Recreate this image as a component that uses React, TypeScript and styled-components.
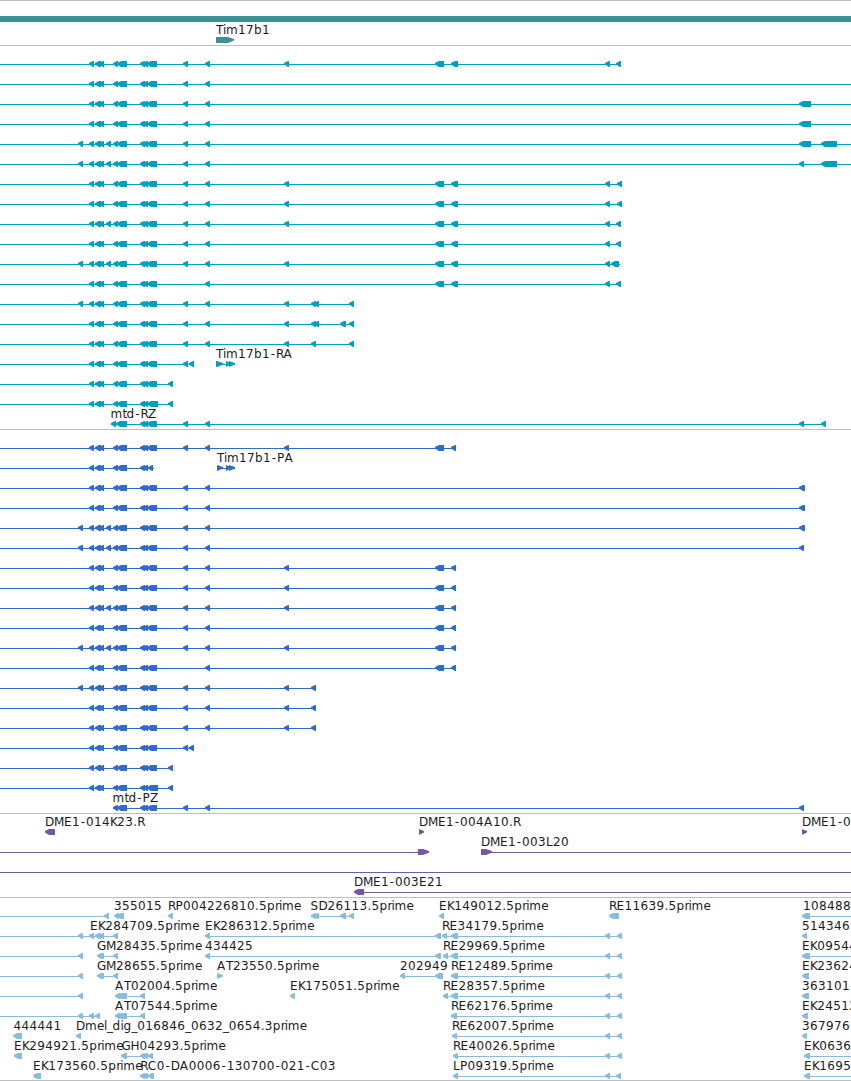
import React from 'react';
import styled, { createGlobalStyle } from 'styled-components';

const WIDTH = 851;

const GlobalStyle = createGlobalStyle`
  body {
    margin: 0;
    background: #ffffff;
    overflow: hidden;
  }
`;

const Viewer = styled.main`
  display: flex;
  flex-direction: column;
  width: ${WIDTH}px;
  height: 1081px;
  overflow: hidden;
  border-top: 1px solid #bebebe;
  box-sizing: border-box;
  background: #ffffff;
`;

const Track = styled.section<{ $last?: boolean }>`
  display: flex;
  flex-direction: column;
  flex: none;
  padding: 2px 0 ${(p) => (p.$last ? 0 : 1)}px;
  border-bottom: 1px solid #bebebe;
`;

const GeneTrack = styled.section`
  display: flex;
  flex-direction: column;
  flex: none;
  height: 29px;
  padding-top: 15px;
  border-bottom: 1px solid #bebebe;
`;

const GeneBar = styled.div`
  height: 6px;
  margin-bottom: 2px;
  background: #3c8f94;
`;

const Lane = styled.svg`
  display: block;
  flex: none;
  width: ${WIDTH}px;
  height: 20px;
  overflow: visible;
`;

const Label = styled.text`
  font-family: 'DejaVu Sans', sans-serif;
  font-size: 12px;
  fill: #1c1c1c;
`;

type Block = [number, number];

interface Feature {
  from: number;
  to: number;
  blocks: Block[];
  forward?: boolean;
  label?: string;
  labelX?: number;
}

/* Advance widths for the label face, in pixels. */
const ADVANCE: Record<string, number> = {
  T: 7, i: 3, l: 3, m: 12, b: 8, d: 8, g: 8, p: 8, r: 4, e: 7, t: 4, _: 5.7, '-': 6, '.': 4,
  A: 9, C: 9, D: 9, E: 8, G: 9, H: 9, K: 7.3, L: 7, M: 10, P: 7.5, R: 7.5, S: 8, Z: 7,
};

function glyphPositions(text: string, start: number): string {
  let x = /^[DEGLRS135]/.test(text) ? start + 0.9 : start;
  const xs: number[] = [];
  for (const ch of text) {
    xs.push(Math.round((ch === '-' ? x + 0.8 : x) * 10) / 10);
    x += ADVANCE[ch] ?? 8;
  }
  return xs.join(' ');
}

function blockPath([s, e]: Block, forward?: boolean): string {
  if (forward) {
    const h = Math.min(6, e - s);
    return `M${s} 13H${e - h}L${e} 15V16.4L${e - h} 19H${s}Z`;
  }
  const h = Math.min(5, e - s);
  return `M${s} 15L${s + h - 1} 13H${e}V19H${s + h - 1}L${s} 16.4Z`;
}

function FeatureLane({ features, color }: { features: Feature[]; color: string }) {
  return (
    <Lane viewBox={`0 0 ${WIDTH} 20`}>
      {features.map((f, i) => (
        <g key={i} fill={color}>
          {f.to > f.from && <rect x={f.from} y={16} width={f.to - f.from} height={1} />}
          {f.blocks.map((b, j) => (
            <path key={j} d={blockPath(b, f.forward)} />
          ))}
        </g>
      ))}
      {features.map(
        (f, i) =>
          f.label && (
            <Label key={i} x={glyphPositions(f.label, f.labelX ?? f.from)} y={10}>
              {f.label}
            </Label>
          ),
      )}
    </Lane>
  );
}

const span = (to: number, blocks: Block[], from = 0): Feature => ({ from, to, blocks });
const named = (label: string, labelX: number, blocks: Block[], from = 0, to = 0, forward = false): Feature => ({
  from, to, blocks, label, labelX, forward,
});

const HEAD: Block[] = [[89, 94], [95, 101], [99, 104], [113, 118]];
const CORE: Block[] = [...HEAD, [117, 127], [140, 145], [143, 148], [147, 157]];
const X78: Block = [78, 83];
const X106: Block = [106, 111];
const X183: Block = [183, 188];
const X205: Block = [205, 210];
const X284: Block = [284, 289];
const PAIR: Block[] = [X183, X205];
const MID: Block[] = [[435, 444], [451, 458]];
const MID_P: Block[] = [[435, 444], [451, 456]];
const FAR: Block[] = [...MID, [605, 610], [616, 621]];
const FAR2: Block[] = [...MID, [605, 610], [617, 622]];
const RIGHT: Block = [799, 811];
const RIGHT_S: Block = [799, 804];
const EDGE: Block = [821, 837];

const transcripts: Feature[][] = [
  [span(621, [...CORE, ...PAIR, X284, ...FAR])],
  [span(851, [...CORE, ...PAIR])],
  [span(851, [...CORE, ...PAIR, RIGHT])],
  [span(851, [...CORE, ...PAIR, RIGHT])],
  [span(851, [X78, X106, ...CORE, ...PAIR, RIGHT, EDGE])],
  [span(851, [X78, X106, ...CORE, ...PAIR, RIGHT_S, EDGE])],
  [span(622, [...CORE, ...PAIR, X284, ...FAR2])],
  [span(622, [...CORE, ...PAIR, X284, ...FAR2])],
  [span(621, [X106, ...CORE, ...PAIR, X284, ...FAR])],
  [span(621, [...CORE, ...PAIR, ...FAR])],
  [span(620, [X78, X106, ...CORE, ...PAIR, X284, ...MID, [605, 610], [611, 619]])],
  [span(621, [...CORE, X205, ...FAR])],
  [span(354, [X78, ...CORE, ...PAIR, X284, [311, 316], [314, 319], [349, 354]])],
  [span(354, [...CORE, ...PAIR, X284, [311, 316], [314, 319], [340, 346], [349, 354]])],
  [span(354, [...CORE, ...PAIR, X284, [311, 316], [349, 354]])],
  [
    span(194, [...CORE, X183, [189, 194]]),
    named('Tim17b1-RA', 216, [[216, 223], [226, 231], [229, 235]], 216, 235, true),
  ],
  [span(173, [...CORE, [168, 173]])],
  [span(173, [...CORE, [148, 158], [168, 173]])],
  [named('mtd-RZ', 110.5, [[111, 116], [116, 127], [140, 145], [143, 148], [147, 157], ...PAIR, RIGHT_S, [821, 826]], 111, 826)],
];

const proteins: Feature[][] = [
  [span(456, [...CORE, ...PAIR, X284, ...MID_P])],
  [
    span(154, [...HEAD, [117, 127], [140, 145], [143, 148], [148, 153]]),
    named('Tim17b1-PA', 217, [[217, 223], [226, 231], [229, 235]], 217, 235, true),
  ],
  [span(804, [...CORE, ...PAIR, [799, 805]])],
  [span(804, [...CORE, ...PAIR, [799, 805]])],
  [span(804, [X78, X106, ...CORE, ...PAIR, [799, 805]])],
  [span(804, [X78, X106, ...CORE, ...PAIR, RIGHT_S])],
  [span(456, [...CORE, ...PAIR, X284, ...MID_P])],
  [span(456, [...CORE, ...PAIR, X284, ...MID_P])],
  [span(456, [X106, ...CORE, ...PAIR, X284, ...MID_P])],
  [span(456, [...CORE, ...PAIR, ...MID_P])],
  [span(456, [X78, X106, ...CORE, ...PAIR, X284, ...MID_P])],
  [span(456, [...CORE, X205, ...MID_P])],
  [span(316, [X78, ...CORE, ...PAIR, X284, [311, 316]])],
  [span(316, [...CORE, ...PAIR, X284, [311, 316]])],
  [span(316, [...CORE, ...PAIR, X284, [311, 316]])],
  [span(194, [...CORE, X183, [189, 194]])],
  [span(173, [...CORE, [168, 173]])],
  [span(173, [...CORE, [148, 158], [168, 173]])],
  [named('mtd-PZ', 112.5, [[113, 118], [117, 127], [140, 145], [143, 148], [147, 157], ...PAIR, RIGHT_S], 113, 804)],
];

const clones: Feature[][] = [
  [
    named('DME1-014K23.R', 44, [[45, 55]]),
    named('DME1-004A10.R', 418, [[419, 424]], 0, 0, true),
    named('DME1-0', 801, [[802, 807]], 0, 0, true),
  ],
  [
    { from: 0, to: 429, blocks: [[418, 429]], forward: true },
    named('DME1-003L20', 480, [[481, 492]], 481, 851, true),
  ],
  [span(851, [])],
  [named('DME1-003E21', 353, [[354, 364]], 354, 851)],
];

const TAIL: Block[] = [[605, 610], [617, 622]];
const AT_BLOCKS: Block[] = [[115, 120], [117, 127], [140, 145]];
const GM_BLOCKS: Block[] = [[97, 102], [99, 104], [113, 118]];

const ests: Feature[][] = [
  [
    span(109, [[104, 109]]),
    named('355015', 113, [[114, 119], [117, 124]]),
    named('RP004226810.5prime', 167, [[168, 173]]),
    named('SD26113.5prime', 309.5, [[311, 316], [314, 319], [340, 346], [349, 354]], 311, 354),
    named('EK149012.5prime', 438, [[439, 444]]),
    named('RE11639.5prime', 608, [[609, 619]]),
    named('108488', 802, [[802, 810]], 802, 851),
  ],
  [
    span(83, [X78]),
    named('EK284709.5prime', 89, HEAD, 83, 118),
    named('EK286312.5prime', 204, [X205, [435, 441]], 205, 441),
    named('RE34179.5prime', 441, [[442, 447], [451, 458], ...TAIL], 442, 622),
    named('514346', 801, [[802, 807]]),
  ],
  [
    span(83, [X78]),
    named('GM28435.5prime', 96, GM_BLOCKS, 97, 118),
    named('434425', 205, [X205, [435, 441]], 205, 441),
    named('RE29969.5prime', 442, [[443, 448], [451, 458], ...TAIL], 443, 622),
    named('EK09544', 801, [[802, 810]], 802, 851),
  ],
  [
    span(83, [X78]),
    named('GM28655.5prime', 96, GM_BLOCKS, 97, 118),
    named('AT23550.5prime', 217, [[217, 223]], 0, 0, true),
    named('202949', 400, [[400, 405], [435, 443]], 400, 443),
    named('RE12489.5prime', 450, [[451, 458], ...TAIL], 451, 622),
    named('EK23624', 801, [[802, 809]]),
  ],
  [
    span(83, [X78]),
    named('AT02004.5prime', 115, AT_BLOCKS, 115, 145),
    named('EK175051.5prime', 289, [[290, 295]]),
    named('RE28357.5prime', 442, [[443, 448], [451, 458], ...TAIL], 443, 622),
    named('363101', 801, [[802, 809]]),
  ],
  [
    span(100, [X78, [89, 94], [95, 100]]),
    named('AT07544.5prime', 115, AT_BLOCKS, 115, 145),
    named('RE62176.5prime', 450, [[451, 457], ...TAIL], 451, 622),
    named('EK24512', 801, [[802, 808]]),
  ],
  [
    named('444441', 13.5, [[13, 22]]),
    named('Dmel_dig_016846_0632_0654.3prime', 75, [[76, 81]]),
    named('RE62007.5prime', 451, [[452, 457], ...TAIL], 452, 622),
    named('367976', 801, [[802, 807]]),
  ],
  [
    named('EK294921.5prime', 13, [[14, 22]]),
    named('GH04293.5prime', 120.5, [[121, 127], [140, 145], [143, 148], [148, 153]], 121, 153),
    named('RE40026.5prime', 452, [[453, 458], ...TAIL], 453, 622),
    named('EK0636', 803, [[804, 810]], 804, 851),
  ],
  [
    named('EK173560.5prime', 32, [[33, 41]]),
    named('RC0-DA0006-130700-021-C03', 139.3, [[140, 145], [143, 148], [148, 154]]),
    named('LP09319.5prime', 452, [[453, 458], [605, 610], [616, 621]], 453, 621),
    named('EK1695', 803, [[804, 810]], 804, 851),
  ],
];

const gene: Feature[] = [named('Tim17b1', 216, [[216, 234]], 0, 0, true)];

function FeatureTrack({ rows, color, last }: { rows: Feature[][]; color: string; last?: boolean }) {
  return (
    <Track $last={last}>
      {rows.map((features, i) => (
        <FeatureLane key={i} features={features} color={color} />
      ))}
    </Track>
  );
}

export default function App() {
  return (
    <>
      <GlobalStyle />
      <Viewer>
        <GeneTrack>
          <GeneBar />
          <FeatureLane features={gene} color="#3c8f94" />
        </GeneTrack>
        <FeatureTrack rows={transcripts} color="#009ebf" />
        <FeatureTrack rows={proteins} color="#2f6bcb" />
        <FeatureTrack rows={clones} color="#7557a7" />
        <FeatureTrack rows={ests} color="#87bcde" last />
      </Viewer>
    </>
  );
}
